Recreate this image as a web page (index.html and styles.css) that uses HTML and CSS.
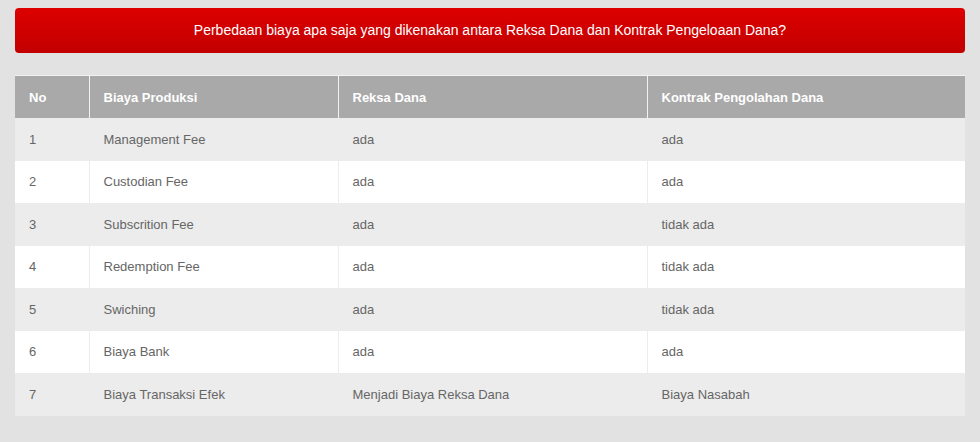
FILE: index.html
```html
<!DOCTYPE html>
<html>
<head>
<meta charset="utf-8">
<link rel="stylesheet" href="styles.css">
</head>
<body>
<div class="page">
  <div class="question">Perbedaan biaya apa saja yang dikenakan antara Reksa Dana dan Kontrak Pengeloaan Dana?</div>
  <table class="fees">
    <colgroup>
      <col class="c-no"><col class="c-prod"><col class="c-rd"><col class="c-kpd">
    </colgroup>
    <thead>
      <tr><th>No</th><th>Biaya Produksi</th><th>Reksa Dana</th><th>Kontrak Pengolahan Dana</th></tr>
    </thead>
    <tbody>
      <tr><td>1</td><td>Management Fee</td><td>ada</td><td>ada</td></tr>
      <tr><td>2</td><td>Custodian Fee</td><td>ada</td><td>ada</td></tr>
      <tr><td>3</td><td>Subscrition Fee</td><td>ada</td><td>tidak ada</td></tr>
      <tr><td>4</td><td>Redemption Fee</td><td>ada</td><td>tidak ada</td></tr>
      <tr><td>5</td><td>Swiching</td><td>ada</td><td>tidak ada</td></tr>
      <tr><td>6</td><td>Biaya Bank</td><td>ada</td><td>ada</td></tr>
      <tr><td>7</td><td>Biaya Transaksi Efek</td><td>Menjadi Biaya Reksa Dana</td><td>Biaya Nasabah</td></tr>
    </tbody>
  </table>
</div>
</body>
</html>
```
FILE: styles.css
```css
html, body {
  margin: 0;
  padding: 0;
  background: #e2e2e2;
  font-family: "Liberation Sans", Arial, sans-serif;
}
.page {
  padding: 8px 15px 0 15px;
}
.question {
  height: 45px;
  box-sizing: border-box;
  border-radius: 4px;
  background: linear-gradient(to bottom, #dd0000, #c20000);
  color: #ffffff;
  font-size: 14px;
  display: flex;
  align-items: center;
  justify-content: center;
  padding-bottom: 1px;
}
.fees {
  margin-top: 22px;
  width: 950px;
  border-collapse: collapse;
  table-layout: fixed;
  font-size: 13px;
  border-top: 1px solid #f2f2f2;
}
.c-no { width: 74px; }
.c-prod { width: 249px; }
.c-rd { width: 309px; }
.c-kpd { width: 318px; }
.fees th {
  background: #a9a9a9;
  color: #ffffff;
  font-weight: bold;
  text-align: left;
  height: 42px;
  padding: 0 14px;
  border-left: 1px solid #f2f2f2;
}
.fees th:first-child { border-left: none; }
.fees td {
  height: 42.5px;
  padding: 0 14px;
  color: #666666;
  border-left: 1px solid #ececec;
}
.fees td:first-child { border-left: none; }
.fees tbody tr:nth-child(odd) td { background: #ececec; }
.fees tbody tr:nth-child(even) td { background: #ffffff; }
```
